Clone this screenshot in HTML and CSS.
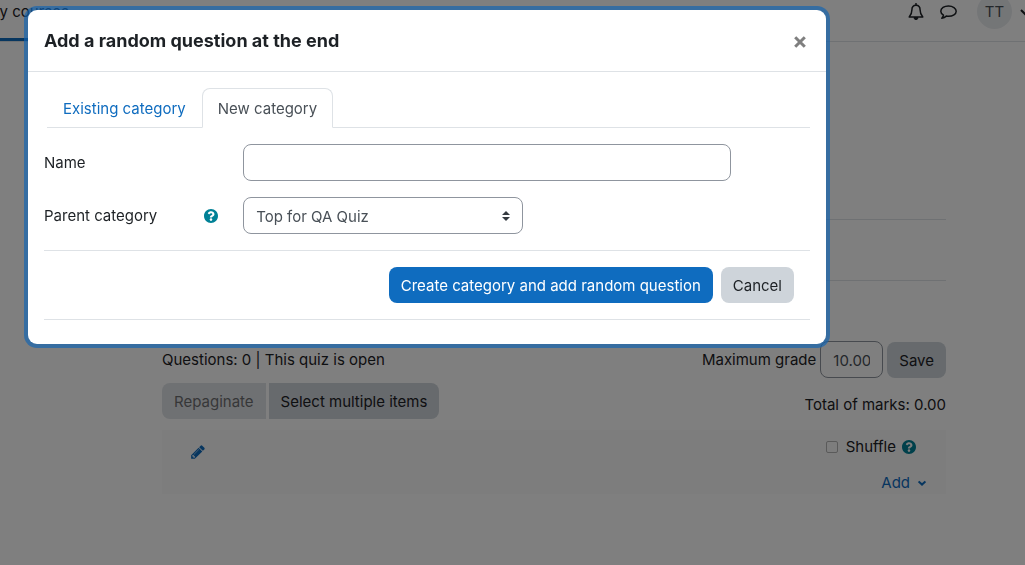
FILE: index.html
```html
<!DOCTYPE html>
<html lang="en">
<head>
    <meta charset="UTF-8">
    <meta name="viewport" content="width=device-width, initial-scale=1.0">
    <title>QA Quiz</title>
    <link rel="stylesheet" href="styles.css">
</head>
<body>
    <header class="navbar">
        <nav class="main-nav">
            <a href="#" class="active">My courses</a>
        </nav>
        <div class="user-nav">
            <button type="button" class="icon-button" aria-label="Notifications">
                <svg width="16" height="18" viewBox="0 0 16 18" fill="none" stroke="currentColor" stroke-width="1.5" stroke-linejoin="round">
                    <path d="M8 2.2C5 2.2 3.9 4.6 3.9 7c0 3.600-.9 5-2.700 6.900h13.600C13 12 12.100 10.600 12.100 7c0-2.400-1.100-4.800-4.100-4.800z"/>
                    <path d="M8 .6v1.600" stroke-linecap="round"/>
                    <path d="M6 14.600a2 2 0 0 0 4 0z" fill="currentColor" stroke-width="1"/>
                </svg>
            </button>
            <button type="button" class="icon-button" aria-label="Messages">
                <svg width="18" height="18" viewBox="0 0 18 18" fill="none" stroke="currentColor" stroke-width="1.500" stroke-linejoin="round">
                    <path d="M9.500 3C5.200 3 1.800 5.200 1.800 8.200c0 1.700 1.100 3.100 2.700 4-.2 1.200-.9 2.200-1.700 3 1.800-.2 3.300-.9 4.500-2.100.7.1 1.400.2 2.200.2 4.300 0 7.700-2.200 7.700-5.100S13.800 3 9.500 3z"/>
                </svg>
            </button>
            <button type="button" class="user-menu" aria-label="User menu">
                <span class="avatar">TT</span>
                <svg width="10" height="8" viewBox="0 0 10 8" fill="none" stroke="currentColor" stroke-width="2"><path d="M1 2l4 4 4-4"/></svg>
            </button>
        </div>
    </header>

    <main class="page">
        <div class="page-head"></div>
        <div class="page-tabs"></div>

        <div class="quiz-bar">
            <span>Questions: 0 | This quiz is open</span>
            <form class="grade-form">
                <label for="max-grade">Maximum grade</label>
                <input type="text" id="max-grade" class="control grade-input" value="10.00">
                <button type="button" class="btn btn-secondary">Save</button>
            </form>
        </div>

        <div class="quiz-tools">
            <div class="btn-group">
                <button type="button" class="btn btn-secondary" disabled>Repaginate</button>
                <button type="button" class="btn btn-secondary">Select multiple items</button>
            </div>
            <span class="total">Total of marks: 0.00</span>
        </div>

        <section class="slots">
            <a href="#" class="edit-link" aria-label="Edit heading">
                <svg width="14" height="16" viewBox="0 0 1536 1792" fill="currentColor"><path d="M363 1536l91-91-235-235-91 91v107h128v128h107zM886 608q0-22-22-22-10 0-17 7l-542 542q-7 7-7 17 0 22 22 22 10 0 17-7l542-542q7-7 7-17zM832 416l416 416-832 832H0v-416zM1515 512q0 53-37 90l-166 166-416-416 166-165q36-38 90-38 53 0 91 38l235 234q37 39 37 91z"/></svg>
            </a>
            <div class="slot-actions">
                <div class="shuffle">
                    <input type="checkbox" id="shuffle">
                    <label for="shuffle">Shuffle</label>
                    <button type="button" class="help" aria-label="Help with shuffle">
                        <svg width="14" height="14" viewBox="8 8 496 496" fill="currentColor"><path d="M504 256c0 136.997-111.043 248-248 248S8 392.997 8 256C8 119.083 119.043 8 256 8s248 111.083 248 248zM262.655 90c-54.497 0-89.255 22.957-116.549 63.758-3.536 5.286-2.353 12.415 2.715 16.258l34.699 26.310c5.205 3.947 12.621 3.008 16.665-2.122 17.864-22.658 30.113-35.797 57.303-35.797 20.429 0 45.698 13.148 45.698 32.958 0 14.976-12.363 22.667-32.534 33.976C247.128 238.528 216 254.941 216 296v4c0 6.627 5.373 12 12 12h56c6.627 0 12-5.373 12-12v-1.333c0-28.462 83.186-29.647 83.186-106.667 0-58.002-60.165-102-116.531-102zM256 338c-25.365 0-46 20.635-46 46 0 25.364 20.635 46 46 46s46-20.636 46-46c0-25.365-20.635-46-46-46z"/></svg>
                    </button>
                </div>
                <a href="#" class="add-menu">Add
                    <svg width="8" height="8" viewBox="0 0 8 8" fill="none" stroke="currentColor" stroke-width="2"><path d="M.6 2.400L4 5.600l3.400-3.200"/></svg>
                </a>
            </div>
        </section>
    </main>

    <div class="backdrop">
        <div class="modal" role="dialog" aria-labelledby="modal-title">
            <div class="modal-header">
                <h1 id="modal-title">Add a random question at the end</h1>
                <button type="button" class="close" aria-label="Close">
                    <svg width="12" height="12" viewBox="0 0 12 12" stroke="currentColor" stroke-width="3"><path d="M1.200 1.200l9.600 9.600M10.800 1.200l-9.600 9.600"/></svg>
                </button>
            </div>
            <div class="modal-body">
                <nav class="tabs">
                    <a href="#">Existing category</a>
                    <a href="#" class="active">New category</a>
                </nav>
                <form class="category-form">
                    <div class="form-row">
                        <label for="name">Name</label>
                        <input type="text" id="name" class="control name-input">
                    </div>
                    <div class="form-row">
                        <div class="label-help">
                            <label for="parent">Parent category</label>
                            <button type="button" class="help" aria-label="Help with parent category">
                                <svg width="14" height="14" viewBox="8 8 496 496" fill="currentColor"><path d="M504 256c0 136.997-111.043 248-248 248S8 392.997 8 256C8 119.083 119.043 8 256 8s248 111.083 248 248zM262.655 90c-54.497 0-89.255 22.957-116.549 63.758-3.536 5.286-2.353 12.415 2.715 16.258l34.699 26.310c5.205 3.947 12.621 3.008 16.665-2.122 17.864-22.658 30.113-35.797 57.303-35.797 20.429 0 45.698 13.148 45.698 32.958 0 14.976-12.363 22.667-32.534 33.976C247.128 238.528 216 254.941 216 296v4c0 6.627 5.373 12 12 12h56c6.627 0 12-5.373 12-12v-1.333c0-28.462 83.186-29.647 83.186-106.667 0-58.002-60.165-102-116.531-102zM256 338c-25.365 0-46 20.635-46 46 0 25.364 20.635 46 46 46s46-20.636 46-46c0-25.365-20.635-46-46-46z"/></svg>
                            </button>
                        </div>
                        <select id="parent" class="control parent-select">
                            <option>Top for QA Quiz</option>
                        </select>
                    </div>
                    <div class="form-actions">
                        <button type="button" class="btn btn-primary">Create category and add random question</button>
                        <button type="button" class="btn btn-secondary">Cancel</button>
                    </div>
                </form>
            </div>
        </div>
    </div>
</body>
</html>
```
FILE: styles.css
```css
* {
    box-sizing: border-box;
}

body {
    margin: 0;
    overflow: hidden;
    font-family: Inter, "Liberation Sans", sans-serif;
    font-size: 15px;
    line-height: 22px;
    color: #1d2125;
    background-color: #fff;
}

a {
    color: #0f6cbf;
    text-decoration: none;
}

button,
input,
select {
    font: inherit;
    color: inherit;
}

button {
    cursor: pointer;
}

svg {
    display: block;
}

/* top bar, partly scrolled out of view */
.navbar {
    display: flex;
    justify-content: space-between;
    height: 60px;
    margin: -18px -10px 0 -14px;
    border-bottom: 1px solid #dee2e6;
}

.main-nav {
    display: flex;
}

.main-nav a {
    display: flex;
    align-items: center;
    color: #1d2125;
    border-top: 3px solid transparent;
    border-bottom: 3px solid #0f6cbf;
}

.user-nav {
    display: flex;
    align-items: center;
    gap: 15px;
    padding-right: 5px;
}

.icon-button,
.user-menu,
.close,
.help {
    padding: 0;
    border: 0;
    background: none;
}

.user-menu {
    display: flex;
    align-items: center;
    gap: 8px;
    margin-left: 5px;
}

.avatar {
    display: flex;
    align-items: center;
    justify-content: center;
    width: 35px;
    height: 35px;
    border-radius: 50%;
    color: #495057;
    background-color: #e9ecef;
}

/* quiz page */
.page {
    padding: 0 79px 0 162px;
}

.page-head {
    height: 178px;
    border-bottom: 1px solid #dee2e6;
}

.page-tabs {
    height: 61px;
    border-bottom: 1px solid #dee2e6;
}

.quiz-bar,
.quiz-tools {
    display: flex;
    align-items: center;
    justify-content: space-between;
}

.quiz-bar {
    margin-top: 60px;
}

.quiz-tools {
    margin: 5px 0 11px;
}

.total {
    padding-top: 8px;
}

.grade-form {
    display: flex;
    align-items: center;
    gap: 4px;
}

.btn {
    height: 36px;
    padding: 2px 11px 0;
    border: 1px solid transparent;
    border-radius: 8px;
}

.btn-primary {
    color: #fff;
    background-color: #0f6cbf;
}

.btn-secondary {
    color: #1d2125;
    background-color: #ced4da;
}

.btn:disabled {
    opacity: 0.65;
}

.btn-group {
    display: flex;
    gap: 3px;
}

.btn-group .btn:first-child {
    border-radius: 8px 0 0 8px;
}

.btn-group .btn:last-child {
    border-radius: 0 8px 8px 0;
}

.control {
    height: 37px;
    padding: 2px 12px 0;
    border: 1px solid #8f959e;
    border-radius: 8px;
    color: #495057;
    background-color: #fff;
}

.grade-input {
    width: 63px;
}

.slots {
    display: flex;
    justify-content: space-between;
    padding: 6px 20px 0 29px;
    height: 64px;
    background-color: #fafafa;
}

.edit-link {
    padding-top: 8px;
}

.slot-actions {
    display: flex;
    flex-direction: column;
    align-items: flex-end;
    gap: 14px;
}

.shuffle {
    display: flex;
    align-items: center;
    gap: 6px;
    padding-right: 10px;
}

.shuffle input {
    appearance: none;
    width: 12px;
    height: 12px;
    margin: 0 2px 0 0;
    border: 1px solid #b5b5b5;
    border-radius: 2px;
}

.help {
    color: #008196;
}

.add-menu {
    display: flex;
    align-items: center;
    gap: 8px;
}

/* dialog */
.backdrop {
    position: fixed;
    inset: 0;
    padding: 10px 28px;
    background-color: rgba(0, 0, 0, 0.5);
}

.modal {
    max-width: 798px;
    border-radius: 9px;
    background-color: #fff;
    box-shadow: 0 0 0 4px rgba(15, 100, 180, 0.65);
}

.modal-header {
    display: flex;
    align-items: flex-start;
    justify-content: space-between;
    padding: 18px 20px 18px 16px;
    border-bottom: 1px solid #dee2e6;
}

.modal-header h1 {
    margin: 0;
    font-size: 18px;
    font-weight: 700;
    line-height: 25px;
}

.close {
    margin-top: 8px;
    color: #7f7f7f;
}

.modal-body {
    padding: 16px 16px 24px;
}

.tabs {
    display: flex;
    margin-left: 3px;
    border-bottom: 1px solid #dee2e6;
}

.tabs a {
    height: 40px;
    margin-bottom: -1px;
    padding: 9px 15px;
    border: 1px solid transparent;
    border-radius: 8px 8px 0 0;
}

.tabs .active {
    color: #495057;
    border-color: #dee2e6 #dee2e6 #fff;
    background-color: #fff;
}

.category-form {
    display: grid;
    gap: 16px;
    padding-top: 16px;
}

.form-row {
    display: grid;
    grid-template-columns: 26% 1fr;
    align-items: center;
}

.label-help {
    display: flex;
    align-items: center;
    justify-content: space-between;
    padding-right: 25px;
}

.name-input {
    width: 86%;
}

.parent-select {
    appearance: none;
    width: 280px;
    background: #fff url("data:image/svg+xml,%3Csvg xmlns='http://www.w3.org/2000/svg' viewBox='0 0 8 10'%3E%3Cpath fill='%23343a40' d='M4 0L0 4h8zM4 10L0 6h8z'/%3E%3C/svg%3E") no-repeat right 12px center / 8px 10px;
}

.form-actions {
    display: flex;
    justify-content: flex-end;
    gap: 8px;
    padding: 16px;
    border-top: 1px solid #dee2e6;
    border-bottom: 1px solid #dee2e6;
}
```
